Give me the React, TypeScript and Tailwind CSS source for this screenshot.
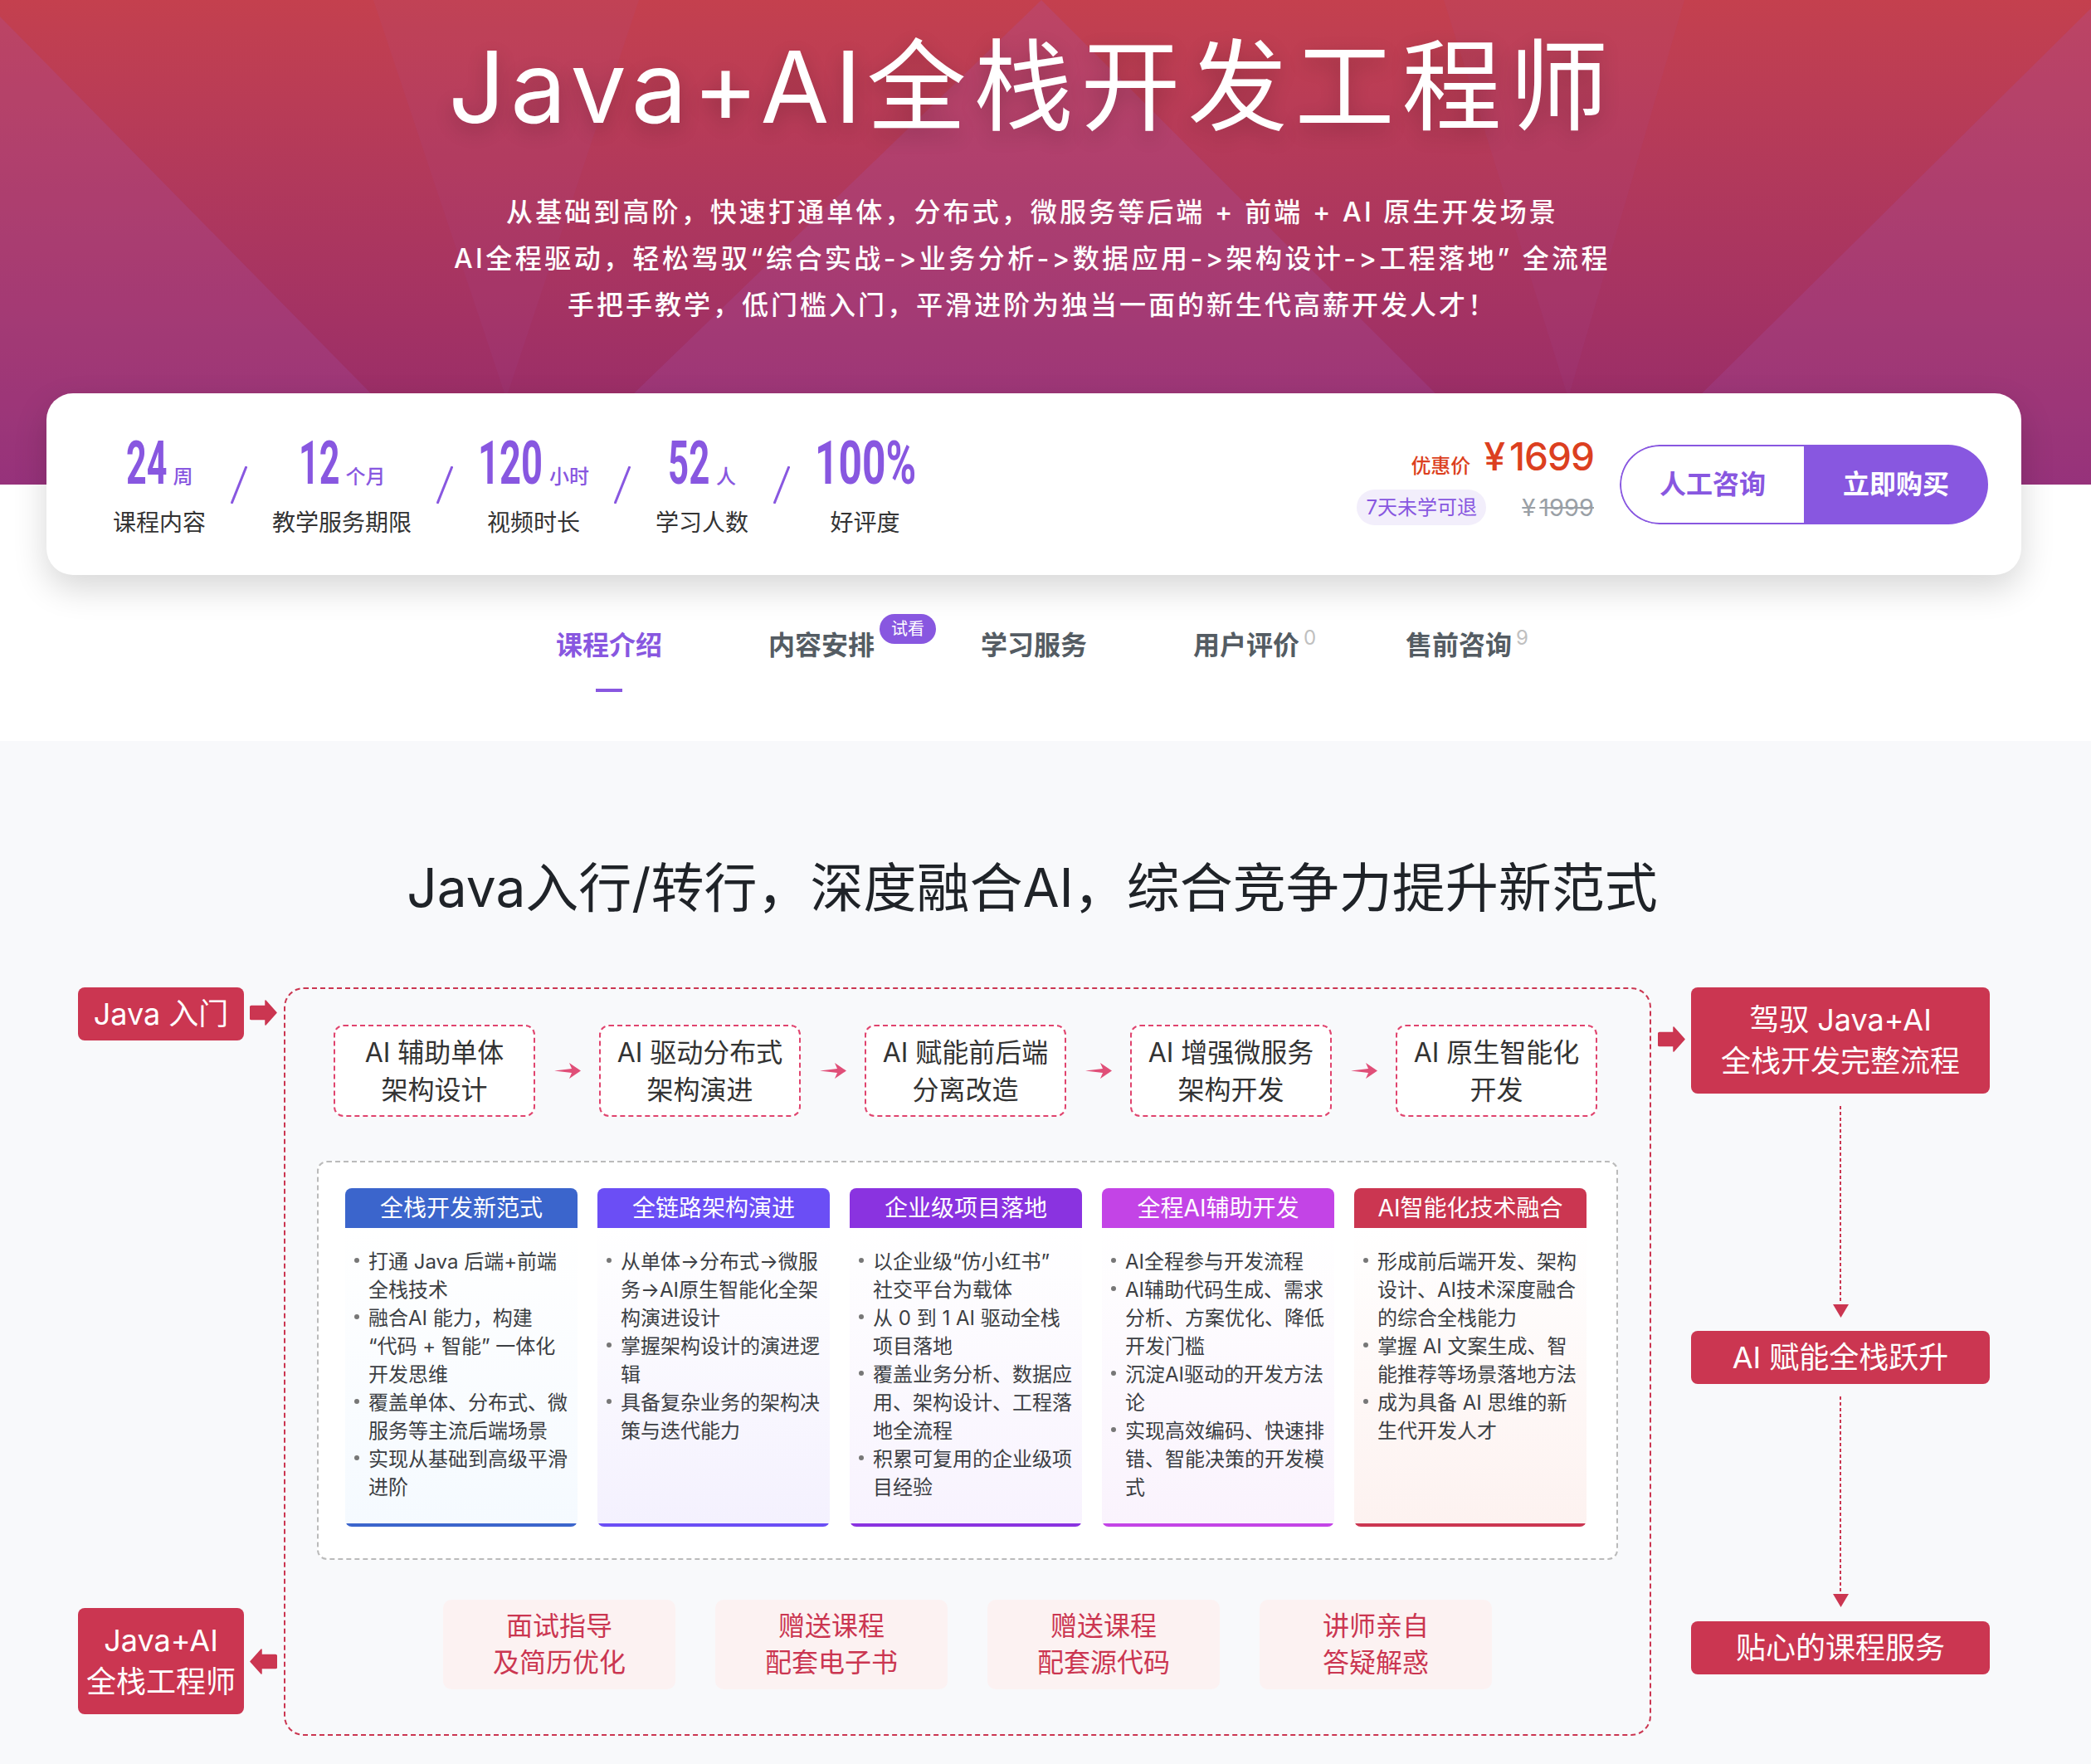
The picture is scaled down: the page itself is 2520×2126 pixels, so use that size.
const stats = [
  { num: "24", unit: "周", label: "课程内容", numClass: "w-[49px] scale-x-[.59]" },
  { num: "12", unit: "个月", label: "教学服务期限", numClass: "w-[49px] scale-x-[.59]" },
  { num: "120", unit: "小时", label: "视频时长", numClass: "w-[78px] scale-x-[.62]" },
  { num: "52", unit: "人", label: "学习人数", numClass: "w-[50px] scale-x-[.6]" },
  { num: "100%", unit: "", label: "好评度", numClass: "w-[121px] scale-x-[.68]" },
];

const tabs = [
  { label: "课程介绍", active: true },
  { label: "内容安排", badge: "试看" },
  { label: "学习服务" },
  { label: "用户评价", sup: "0" },
  { label: "售前咨询", sup: "9" },
];

const steps = [
  ["AI 辅助单体", "架构设计"],
  ["AI 驱动分布式", "架构演进"],
  ["AI 赋能前后端", "分离改造"],
  ["AI 增强微服务", "架构开发"],
  ["AI 原生智能化", "开发"],
];

const columns = [
  {
    title: "全栈开发新范式",
    head: "bg-[#3b65cc]",
    body: "to-[#f5faff]",
    items: [
      ["打通 Java 后端+前端", "全栈技术"],
      ["融合AI 能力，构建", "“代码 + 智能” 一体化", "开发思维"],
      ["覆盖单体、分布式、微", "服务等主流后端场景"],
      ["实现从基础到高级平滑", "进阶"],
    ],
  },
  {
    title: "全链路架构演进",
    head: "bg-[#6b4ef5]",
    body: "to-[#f4f1fe]",
    items: [
      ["从单体→分布式→微服", "务→AI原生智能化全架", "构演进设计"],
      ["掌握架构设计的演进逻", "辑"],
      ["具备复杂业务的架构决", "策与迭代能力"],
    ],
  },
  {
    title: "企业级项目落地",
    head: "bg-[#8a33e0]",
    body: "to-[#f8f3fe]",
    items: [
      ["以企业级“仿小红书”", "社交平台为载体"],
      ["从 0 到 1 AI 驱动全栈", "项目落地"],
      ["覆盖业务分析、数据应", "用、架构设计、工程落", "地全流程"],
      ["积累可复用的企业级项", "目经验"],
    ],
  },
  {
    title: "全程AI辅助开发",
    head: "bg-[#c344e6]",
    body: "to-[#faf3fd]",
    items: [
      ["AI全程参与开发流程"],
      ["AI辅助代码生成、需求", "分析、方案优化、降低", "开发门槛"],
      ["沉淀AI驱动的开发方法", "论"],
      ["实现高效编码、快速排", "错、智能决策的开发模", "式"],
    ],
  },
  {
    title: "AI智能化技术融合",
    head: "bg-[#cb3651]",
    body: "to-[#fdf2f0]",
    items: [
      ["形成前后端开发、架构", "设计、AI技术深度融合", "的综合全栈能力"],
      ["掌握 AI 文案生成、智", "能推荐等场景落地方法"],
      ["成为具备 AI 思维的新", "生代开发人才"],
    ],
  },
];

const services = [
  ["面试指导", "及简历优化"],
  ["赠送课程", "配套电子书"],
  ["赠送课程", "配套源代码"],
  ["讲师亲自", "答疑解惑"],
];

const FatArrow = ({ className = "" }: { className?: string }) => (
  <svg viewBox="0 0 33 33" className={`h-[33px] w-[33px] shrink-0 ${className}`}>
    <path
      d="M2 8.5H19V2L32 16.5 19 31V24.5H2a1.5 1.5 0 0 1-1.5-1.5V10A1.5 1.5 0 0 1 2 8.5Z"
      fill="#cb3651"
      stroke="#cb3651"
      strokeWidth="1.5"
      strokeLinejoin="round"
    />
  </svg>
);

const StepArrow = () => (
  <svg viewBox="0 0 32 19" className="h-[19px] w-[32px] shrink-0">
    <path d="M0 9.5 21 7 18 0 32 9.5 18 19 21 12Z" fill="#e04f78" />
  </svg>
);

const Connector = ({ height }: { height: string }) => (
  <div className="flex flex-col items-center">
    <div className={`w-[2px] bg-[repeating-linear-gradient(to_bottom,#cb3651_0,#cb3651_4px,transparent_4px,transparent_7px)] ${height}`} />
    <svg viewBox="0 0 19 16" className="mt-[2px] h-[16px] w-[19px]">
      <path d="M0 0H19L9.5 16Z" fill="#cb3651" />
    </svg>
  </div>
);

const RedBox = ({ lines, className }: { lines: string[]; className: string }) => (
  <div className={`flex flex-col items-center justify-center rounded-[8px] bg-[#cb3651] text-[36px] leading-[50px] text-white ${className}`}>
    {lines.map((line) => (
      <div key={line} className="whitespace-pre">{line}</div>
    ))}
  </div>
);

export default function App() {
  return (
    <div className="w-[2520px] min-h-[2126px] bg-white font-['Inter','Noto_Sans_CJK_SC',sans-serif]">
      {/* Hero */}
      <div className="relative h-[584px] overflow-hidden bg-gradient-to-b from-[#c4404e] to-[#93296c] text-white">
        <svg viewBox="0 0 2520 584" className="absolute inset-0 h-full w-full">
          <path d="M0 20 555 584H0Z" fill="#a65cb8" fillOpacity=".2" />
          <path d="M1255 0 650 584H1840Z" fill="#a65cb8" fillOpacity=".2" />
          <path d="M2520 10 1940 584H2520Z" fill="#a65cb8" fillOpacity=".2" />
          <path d="M450 0H770L610 480Z" fill="#a65cb8" fillOpacity=".08" />
          <path d="M1740 0H2030L1890 480Z" fill="#a65cb8" fillOpacity=".08" />
        </svg>
        <div className="relative flex flex-col items-center pr-[32px] pt-[25px]">
          <h1 className="h-[160px] text-[120px] font-normal leading-[160px] whitespace-nowrap [text-shadow:0_8px_24px_rgba(0,0,0,0.2)]">
            <span className="tracking-[6.5px]">Java+AI</span>
            <span className="tracking-[9px]">全栈开发工程师</span>
          </h1>
          <div className="mt-[43px] text-center text-[32px] font-medium leading-[56px]">
            <p className="tracking-[3.1px]">从基础到高阶，快速打通单体，分布式，微服务等后端 + 前端 + AI 原生开发场景</p>
            <p className="tracking-[3.45px]">AI全程驱动，轻松驾驭“综合实战-&gt;业务分析-&gt;数据应用-&gt;架构设计-&gt;工程落地” 全流程</p>
            <p className="tracking-[3px]">手把手教学，低门槛入门，平滑进阶为独当一面的新生代高薪开发人才！</p>
          </div>
        </div>
      </div>

      {/* Summary card */}
      <div className="relative ml-[56px] -mt-[110px] flex h-[219px] w-[2380px] items-center justify-between rounded-[32px] bg-white pl-[80px] pr-[40px] shadow-[0_16px_40px_rgba(0,0,0,0.16)]">
        <div className="mt-[5px] flex items-start gap-[30px]">
          {stats.map((stat, index) => (
            <div key={stat.label} className="flex items-start gap-[30px]">
              {index > 0 && (
                <svg viewBox="0 0 20 45" className="mt-[40px] h-[45px] w-[20px]">
                  <path d="M19 0 1 45" stroke="#8857e0" strokeWidth="3" />
                </svg>
              )}
              <div className="flex flex-col items-center">
                <div className="flex h-[72px] items-baseline gap-[8px] font-['Roboto'] font-bold text-[#8857e0]">
                  <span className={`inline-block origin-left whitespace-nowrap text-[73px] leading-[72px] ${stat.numClass}`}>{stat.num}</span>
                  {stat.unit && <span className="font-['Noto_Sans_CJK_SC'] text-[24px] font-medium leading-[24px]">{stat.unit}</span>}
                </div>
                <div className="mt-[16px] whitespace-nowrap text-[28px] leading-[40px] text-[#333]">{stat.label}</div>
              </div>
            </div>
          ))}
        </div>

        <div className="flex items-center gap-[31px]">
          <div className="mb-[12px] flex flex-col items-end">
            <div className="flex items-end gap-[16px] text-[#dc3f20]">
              <span className="text-[24px] font-medium leading-[32px]">优惠价</span>
              <span className="text-[46px] font-medium leading-[56px] tracking-[-1px]">
                <span className="mr-[6px]">¥</span>1699
              </span>
            </div>
            <div className="mt-[12px] flex items-center gap-[43px]">
              <span className="flex h-[43px] w-[156px] items-center justify-center rounded-full bg-[#f2eefb] text-[24px] text-[#8857e0]">7天未学可退</span>
              <span className="text-[29px] text-[#9aa0a6] line-through">
                <span className="mr-[5px]">¥</span>1999
              </span>
            </div>
          </div>
          <div className="flex h-[96px] w-[444px] overflow-hidden rounded-full text-[32px] font-bold">
            <div className="flex w-[222px] items-center justify-center rounded-l-full border-2 border-r-0 border-[#8857e0] text-[#8857e0]">人工咨询</div>
            <div className="flex w-[222px] items-center justify-center bg-[#8857e0] text-white">立即购买</div>
          </div>
        </div>
      </div>

      {/* Tabs */}
      <div className="flex h-[200px] gap-[128px] pl-[670px] pt-[61px]">
        {tabs.map((tab) => (
          <div key={tab.label} className="relative flex w-[128px] flex-col items-center">
            <div className={`text-[32px] font-bold leading-[48px] whitespace-nowrap ${tab.active ? "text-[#8857e0]" : "text-[#545c63]"}`}>{tab.label}</div>
            {tab.active && <div className="mt-[28px] h-[4px] w-[32px] bg-[#8857e0]" />}
            {tab.badge && (
              <span className="absolute left-[134px] -top-[14px] flex h-[36px] w-[68px] items-center justify-center rounded-full bg-[#8857e0] text-[20px] text-white">{tab.badge}</span>
            )}
            {tab.sup && <span className="absolute left-[133px] top-[1px] text-[24px] leading-[28px] text-[#c0c0c0]">{tab.sup}</span>}
          </div>
        ))}
      </div>

      {/* Course overview */}
      <div className="min-h-[1233px] bg-[#f8f9fb] pt-[132px]">
        <h2 className="pr-[32px] text-center text-[64px] font-normal leading-[90px] text-[#1f2328]">Java入行/转行，深度融合AI，综合竞争力提升新范式</h2>

        <div className="mt-[75px] flex pl-[94px]">
          {/* Left labels */}
          <div className="flex w-[240px] flex-col">
            <div className="flex items-center gap-[7px]">
              <RedBox lines={["Java 入门"]} className="h-[64px] w-[200px]" />
              <FatArrow className="mb-[4px]" />
            </div>
            <div className="mt-[684px] flex items-center gap-[7px]">
              <RedBox lines={["Java+AI", "全栈工程师"]} className="h-[128px] w-[200px]" />
              <FatArrow className="-scale-x-100" />
            </div>
          </div>

          {/* Main frame */}
          <div className="ml-[8px] h-[902px] w-[1648px] rounded-[24px] border-2 border-dashed border-[#cb3651] pt-[43px]">
            <div className="flex items-center gap-[22.5px] pl-[58px]">
              {steps.map((step, index) => (
                <div key={step[0]} className="flex items-center gap-[22.5px]">
                  {index > 0 && <StepArrow />}
                  <div className="flex h-[111px] w-[243px] flex-col items-center justify-center rounded-[12px] border-2 border-dashed border-[#e0446e] bg-white text-[32px] leading-[45px] text-[#333]">
                    {step.map((line) => (
                      <div key={line}>{line}</div>
                    ))}
                  </div>
                </div>
              ))}
            </div>

            <div className="ml-[38px] mt-[53px] flex h-[481px] w-[1568px] gap-[24px] rounded-[12px] border-2 border-dashed border-[#bbbbbb] bg-white pl-[32px] pt-[31px]">
              {columns.map((column) => (
                <div key={column.title} className="flex h-[408px] w-[280px] flex-col overflow-hidden rounded-[8px]">
                  <div className={`flex h-[48px] items-center justify-center text-[28px] text-white ${column.head}`}>{column.title}</div>
                  <div className={`flex-1 bg-gradient-to-b from-white pt-[24px] text-[24px] leading-[34px] text-[#3c3f44] ${column.body}`}>
                    {column.items.map((item) => (
                      <div key={item[0]} className="flex pl-[11px]">
                        <span className="mt-[12px] h-[6px] w-[6px] shrink-0 rounded-full bg-[#777]" />
                        <div className="ml-[11px] whitespace-nowrap">
                          {item.map((line) => (
                            <div key={line}>{line}</div>
                          ))}
                        </div>
                      </div>
                    ))}
                  </div>
                  <div className={`h-[4px] ${column.head}`} />
                </div>
              ))}
            </div>

            <div className="mt-[48px] flex justify-center gap-[48px]">
              {services.map((service, index) => (
                <div key={index} className="flex h-[108px] w-[280px] flex-col items-center justify-center rounded-[10px] bg-[#fcf2f2] text-[32px] leading-[44px] text-[#cb3651]">
                  {service.map((line) => (
                    <div key={line}>{line}</div>
                  ))}
                </div>
              ))}
            </div>
          </div>

          {/* Right outcomes */}
          <div className="ml-[8px] flex flex-col">
            <div className="flex items-center gap-[7px]">
              <FatArrow className="mb-[4px]" />
              <RedBox lines={["驾驭 Java+AI", "全栈开发完整流程"]} className="h-[128px] w-[360px]" />
            </div>
            <div className="ml-[40px] flex w-[360px] flex-col items-center">
              <div className="mb-[16px] mt-[15px]">
                <Connector height="h-[237px]" />
              </div>
              <RedBox lines={["AI 赋能全栈跃升"]} className="h-[64px] w-[360px]" />
              <div className="mb-[17px] mt-[15px]">
                <Connector height="h-[236px]" />
              </div>
              <RedBox lines={["贴心的课程服务"]} className="h-[64px] w-[360px]" />
            </div>
          </div>
        </div>
      </div>
    </div>
  );
}
